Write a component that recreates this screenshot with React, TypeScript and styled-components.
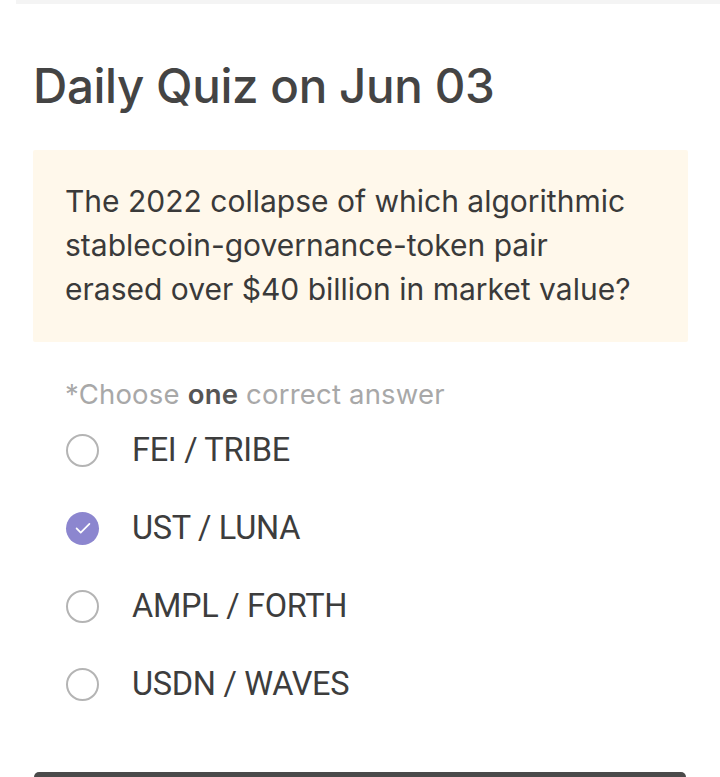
import React from 'react';
import styled, { createGlobalStyle } from 'styled-components';

const GlobalStyle = createGlobalStyle`
  html, body {
    margin: 0;
    padding: 0;
    background: #ffffff;
  }
  body {
    font-family: Inter, "Noto Sans", sans-serif;
  }
`;

const Page = styled.div`
  width: 720px;
  height: 777px;
  overflow: hidden;
  display: flex;
  flex-direction: column;
`;

const TopStrip = styled.div`
  height: 4px;
  margin-left: 16px;
  background: #f4f4f4;
  flex-shrink: 0;
`;

const Content = styled.div`
  padding: 46px 32px 0 33px;
  display: flex;
  flex-direction: column;
  flex: 1;
`;

const Title = styled.h1`
  margin: 0;
  font-family: Inter, "Noto Sans", sans-serif;
  font-weight: 500;
  font-size: 47.5px;
  line-height: 72px;
  color: #444444;
  letter-spacing: -0.4px;
`;

const QuestionBox = styled.div`
  margin-top: 28px;
  background: #fff8eb;
  padding: 29px 42px 31px 32px;
  border-radius: 2px;
`;

const QuestionText = styled.p`
  margin: 0;
  font-family: Inter, "Noto Sans", sans-serif;
  font-weight: 400;
  font-size: 30px;
  line-height: 44px;
  color: #3a3a3a;
`;

const Hint = styled.div`
  margin-top: 36px;
  padding-left: 32px;
  font-family: Inter, "Noto Sans", sans-serif;
  font-size: 27.5px;
  line-height: 32px;
  color: #a8a8a8;
  letter-spacing: 0.2px;

  b {
    color: #555555;
    font-weight: 600;
  }
`;

const Options = styled.div`
  margin-top: 16px;
  display: flex;
  flex-direction: column;
  gap: 30px;
`;

const Option = styled.label`
  display: flex;
  align-items: center;
  height: 48px;
  padding-left: 33px;
  gap: 33px;
  cursor: pointer;
`;

const Radio = styled.span<{ $checked?: boolean }>`
  width: 33px;
  height: 33px;
  border-radius: 50%;
  box-sizing: border-box;
  flex-shrink: 0;
  display: flex;
  align-items: center;
  justify-content: center;
  border: ${(p) => (p.$checked ? 'none' : '2.5px solid #b4b4b4')};
  background: ${(p) => (p.$checked ? '#8c86cf' : '#ffffff')};
`;

const OptionLabel = styled.span`
  font-family: Roboto, "Noto Sans", sans-serif;
  font-size: 32.5px;
  color: #3d3d3d;
  letter-spacing: -0.3px;
`;

const Spacer = styled.div`
  flex: 1;
`;

const SubmitBar = styled.div`
  height: 5px;
  margin: 0 34px;
  border-radius: 6px 6px 0 0;
  background: #4a4a4a;
  flex-shrink: 0;
`;

const answers = [
  { text: 'FEI / TRIBE', checked: false },
  { text: 'UST / LUNA', checked: true },
  { text: 'AMPL / FORTH', checked: false },
  { text: 'USDN / WAVES', checked: false },
];

const Check = () => (
  <svg width="22" height="22" viewBox="0 0 24 24" fill="none">
    <path d="M5 12.5l4.5 4.5L19 7.5" stroke="#ffffff" strokeWidth="1.9" strokeLinecap="round" strokeLinejoin="round" />
  </svg>
);

const App = () => {
  return (
    <Page>
      <GlobalStyle />
      <TopStrip />
      <Content>
        <Title>Daily Quiz on Jun 03</Title>
        <QuestionBox>
          <QuestionText>
            The 2022 collapse of which algorithmic stablecoin-governance-token pair erased over $40 billion in market value?
          </QuestionText>
        </QuestionBox>
        <Hint>
          *Choose <b>one</b> correct answer
        </Hint>
        <Options>
          {answers.map((a, i) => (
            <Option key={i}>
              <Radio $checked={a.checked}>{a.checked && <Check />}</Radio>
              <OptionLabel>{a.text}</OptionLabel>
            </Option>
          ))}
        </Options>
        <Spacer />
      </Content>
      <SubmitBar />
    </Page>
  );
};

export default App;
